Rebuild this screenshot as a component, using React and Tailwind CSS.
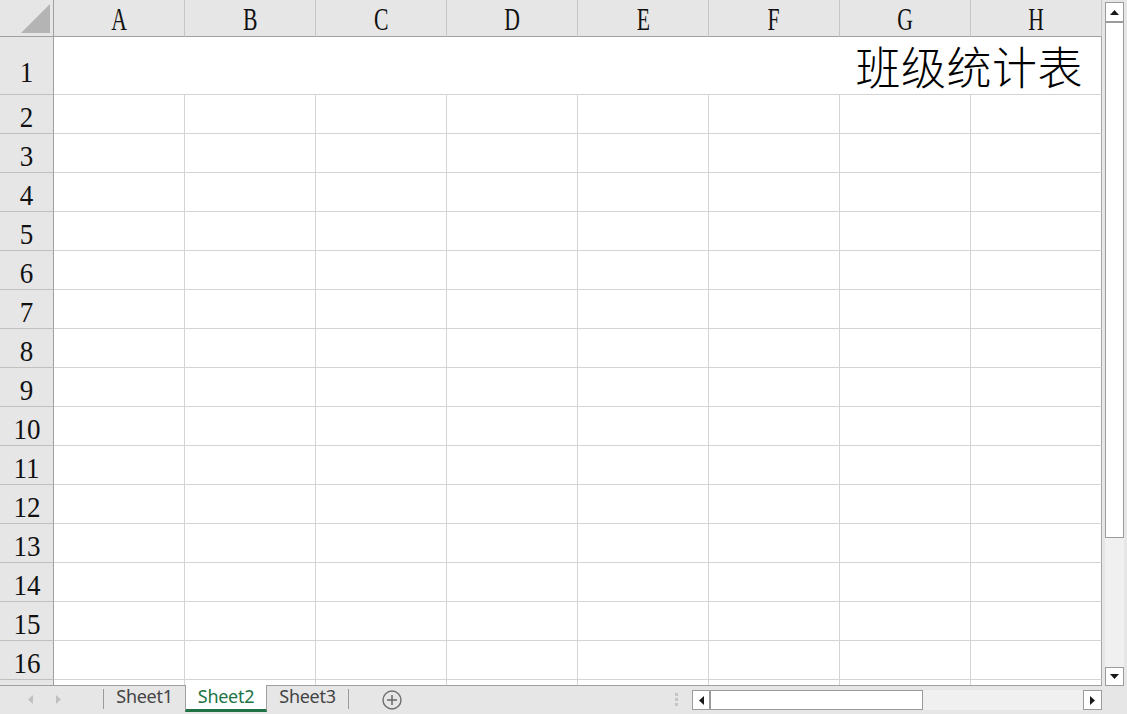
import React from "react";

const COLS = ["A", "B", "C", "D", "E", "F", "G", "H"];
const ROWS = Array.from({ length: 17 }, (_, i) => i + 1);

function HeaderRow() {
  return (
    <>
      <div className="h-[37px] bg-[#e6e6e6] border-r border-b border-[#a0a0a0] flex items-start pl-[21px] pt-[4px]">
        <svg width="30" height="30" viewBox="0 0 30 30">
          <polygon points="0,29 29,0 29,29" fill="#b4b4b4" />
        </svg>
      </div>
      {COLS.map((c) => (
        <div
          key={c}
          className="h-[37px] bg-[#e6e6e6] border-r border-b border-r-[#c6c6c6] border-b-[#a0a0a0] flex items-center justify-center pt-[4px]"
        >
          <span className="inline-block font-['Liberation_Serif',serif] text-[31px] leading-[26px] text-[#111] scale-x-[0.7]">
            {c}
          </span>
        </div>
      ))}
    </>
  );
}

function RowHeader({ n }) {
  const h = n === 1 ? "h-[58px] pt-[13px]" : "h-[39px] pt-[5px]";
  return (
    <div
      className={`${h} bg-[#e6e6e6] border-r border-b border-r-[#a0a0a0] border-b-[#c0c0c0] flex items-center justify-center`}
    >
      {n < 17 && (
        <span className="inline-block font-['Liberation_Serif',serif] text-[30px] leading-none text-[#111] scale-x-90">
          {n}
        </span>
      )}
    </div>
  );
}

function Sheet() {
  return (
    <div className="w-[1102px] h-[686px] overflow-hidden border-b border-[#a0a0a0] bg-white">
      <div className="grid grid-cols-[54px_repeat(8,131px)]">
        <HeaderRow />
        {ROWS.map((n) =>
          n === 1 ? (
            <React.Fragment key={n}>
              <RowHeader n={n} />
              <div className="col-span-8 h-[58px] border-b border-r border-b-[#d4d4d4] border-r-[#a6a6a6] flex items-center justify-end pr-[18px]">
                <span className="font-['Noto_Sans_CJK_SC',sans-serif] text-[45px] leading-none text-black font-light tracking-[0.5px]">
                  班级统计表
                </span>
              </div>
            </React.Fragment>
          ) : (
            <React.Fragment key={n}>
              <RowHeader n={n} />
              {COLS.map((c, i) => (
                <div
                  key={c}
                  className={`h-[39px] border-b border-r border-b-[#d4d4d4] ${
                    i === 7 ? "border-r-[#a6a6a6]" : "border-r-[#d4d4d4]"
                  }`}
                />
              ))}
            </React.Fragment>
          )
        )}
      </div>
    </div>
  );
}

function VScroll() {
  return (
    <div className="w-[25px] h-[686px] bg-[#e6e6e6] flex flex-col items-start pl-[3px] pt-[2px]">
      <div className="w-[19px] h-[20px] bg-white border border-[#9b9b9b] flex items-center justify-center">
        <svg width="9" height="5" viewBox="0 0 9 5">
          <polygon points="0,5 4.5,0 9,5" fill="#1a1a1a" />
        </svg>
      </div>
      <div className="w-[19px] h-[516px] bg-white border border-[#9b9b9b]" />
      <div className="w-[19px] flex-1 bg-[#f0f0f0]" />
      <div className="w-[19px] h-[19px] bg-white border border-[#9b9b9b] flex items-center justify-center">
        <svg width="9" height="5" viewBox="0 0 9 5">
          <polygon points="0,0 9,0 4.5,5" fill="#1a1a1a" />
        </svg>
      </div>
    </div>
  );
}

function TabBar() {
  const tabText = "font-['Noto_Sans',sans-serif] text-[18px] leading-none tracking-[-0.3px]";
  return (
    <div className="h-[28px] bg-[#e6e6e6] flex items-start">
      <div className="w-[103px] h-full flex items-start pt-[9px]">
        <svg className="ml-[28px]" width="5" height="9" viewBox="0 0 5 9">
          <polygon points="5,0 0,4.5 5,9" fill="#c0c0c0" />
        </svg>
        <svg className="ml-[23px]" width="5" height="9" viewBox="0 0 5 9">
          <polygon points="0,0 5,4.5 0,9" fill="#c0c0c0" />
        </svg>
      </div>
      <div className="w-px h-[20px] mt-[3px] bg-[#9a9a9a]" />
      <div className={`w-[81px] h-full flex justify-center pt-[1px] text-[#444] ${tabText}`}>
        Sheet1
      </div>
      <div
        className={`relative -mt-px w-[82px] h-[27px] bg-white border-x border-x-[#a0a0a0] border-b-[3px] border-b-[#217346] flex justify-center pt-[2px] text-[#217346] ${tabText}`}
      >
        Sheet2
      </div>
      <div className={`w-[81px] h-full flex justify-center pt-[1px] text-[#444] ${tabText}`}>
        Sheet3
      </div>
      <div className="w-px h-[20px] mt-[3px] bg-[#9a9a9a]" />
      <svg className="ml-[33px] mt-[4px]" width="20" height="20" viewBox="0 0 20 20">
        <circle cx="10" cy="10" r="9" fill="none" stroke="#6e6e6e" strokeWidth="1.4" />
        <line x1="5" y1="10" x2="15" y2="10" stroke="#6e6e6e" strokeWidth="1.6" />
        <line x1="10" y1="5" x2="10" y2="15" stroke="#6e6e6e" strokeWidth="1.6" />
      </svg>
      <div className="flex-1" />
      <div className="w-[3px] mt-[7px] flex flex-col gap-[2px]">
        <div className="w-[3px] h-[3px] bg-[#c4c4c4]" />
        <div className="w-[3px] h-[3px] bg-[#c4c4c4]" />
        <div className="w-[3px] h-[3px] bg-[#c4c4c4]" />
      </div>
      <div className="ml-[14px] mt-[4px] w-[410px] h-[20px] flex">
        <div className="w-[18px] h-full bg-white border border-[#9b9b9b] flex items-center justify-center">
          <svg width="5" height="9" viewBox="0 0 5 9">
            <polygon points="5,0 0,4.5 5,9" fill="#1a1a1a" />
          </svg>
        </div>
        <div className="w-[213px] h-full bg-white border border-[#9b9b9b]" />
        <div className="w-[160px] h-full bg-[#f0f0f0]" />
        <div className="w-[19px] h-full bg-white border border-[#9b9b9b] flex items-center justify-center">
          <svg width="5" height="9" viewBox="0 0 5 9">
            <polygon points="0,0 5,4.5 0,9" fill="#1a1a1a" />
          </svg>
        </div>
      </div>
      <div className="w-[25px]" />
    </div>
  );
}

export default function App() {
  return (
    <div className="w-[1127px] h-[714px] overflow-hidden bg-[#e6e6e6] flex flex-col">
      <div className="flex">
        <Sheet />
        <VScroll />
      </div>
      <TabBar />
    </div>
  );
}
